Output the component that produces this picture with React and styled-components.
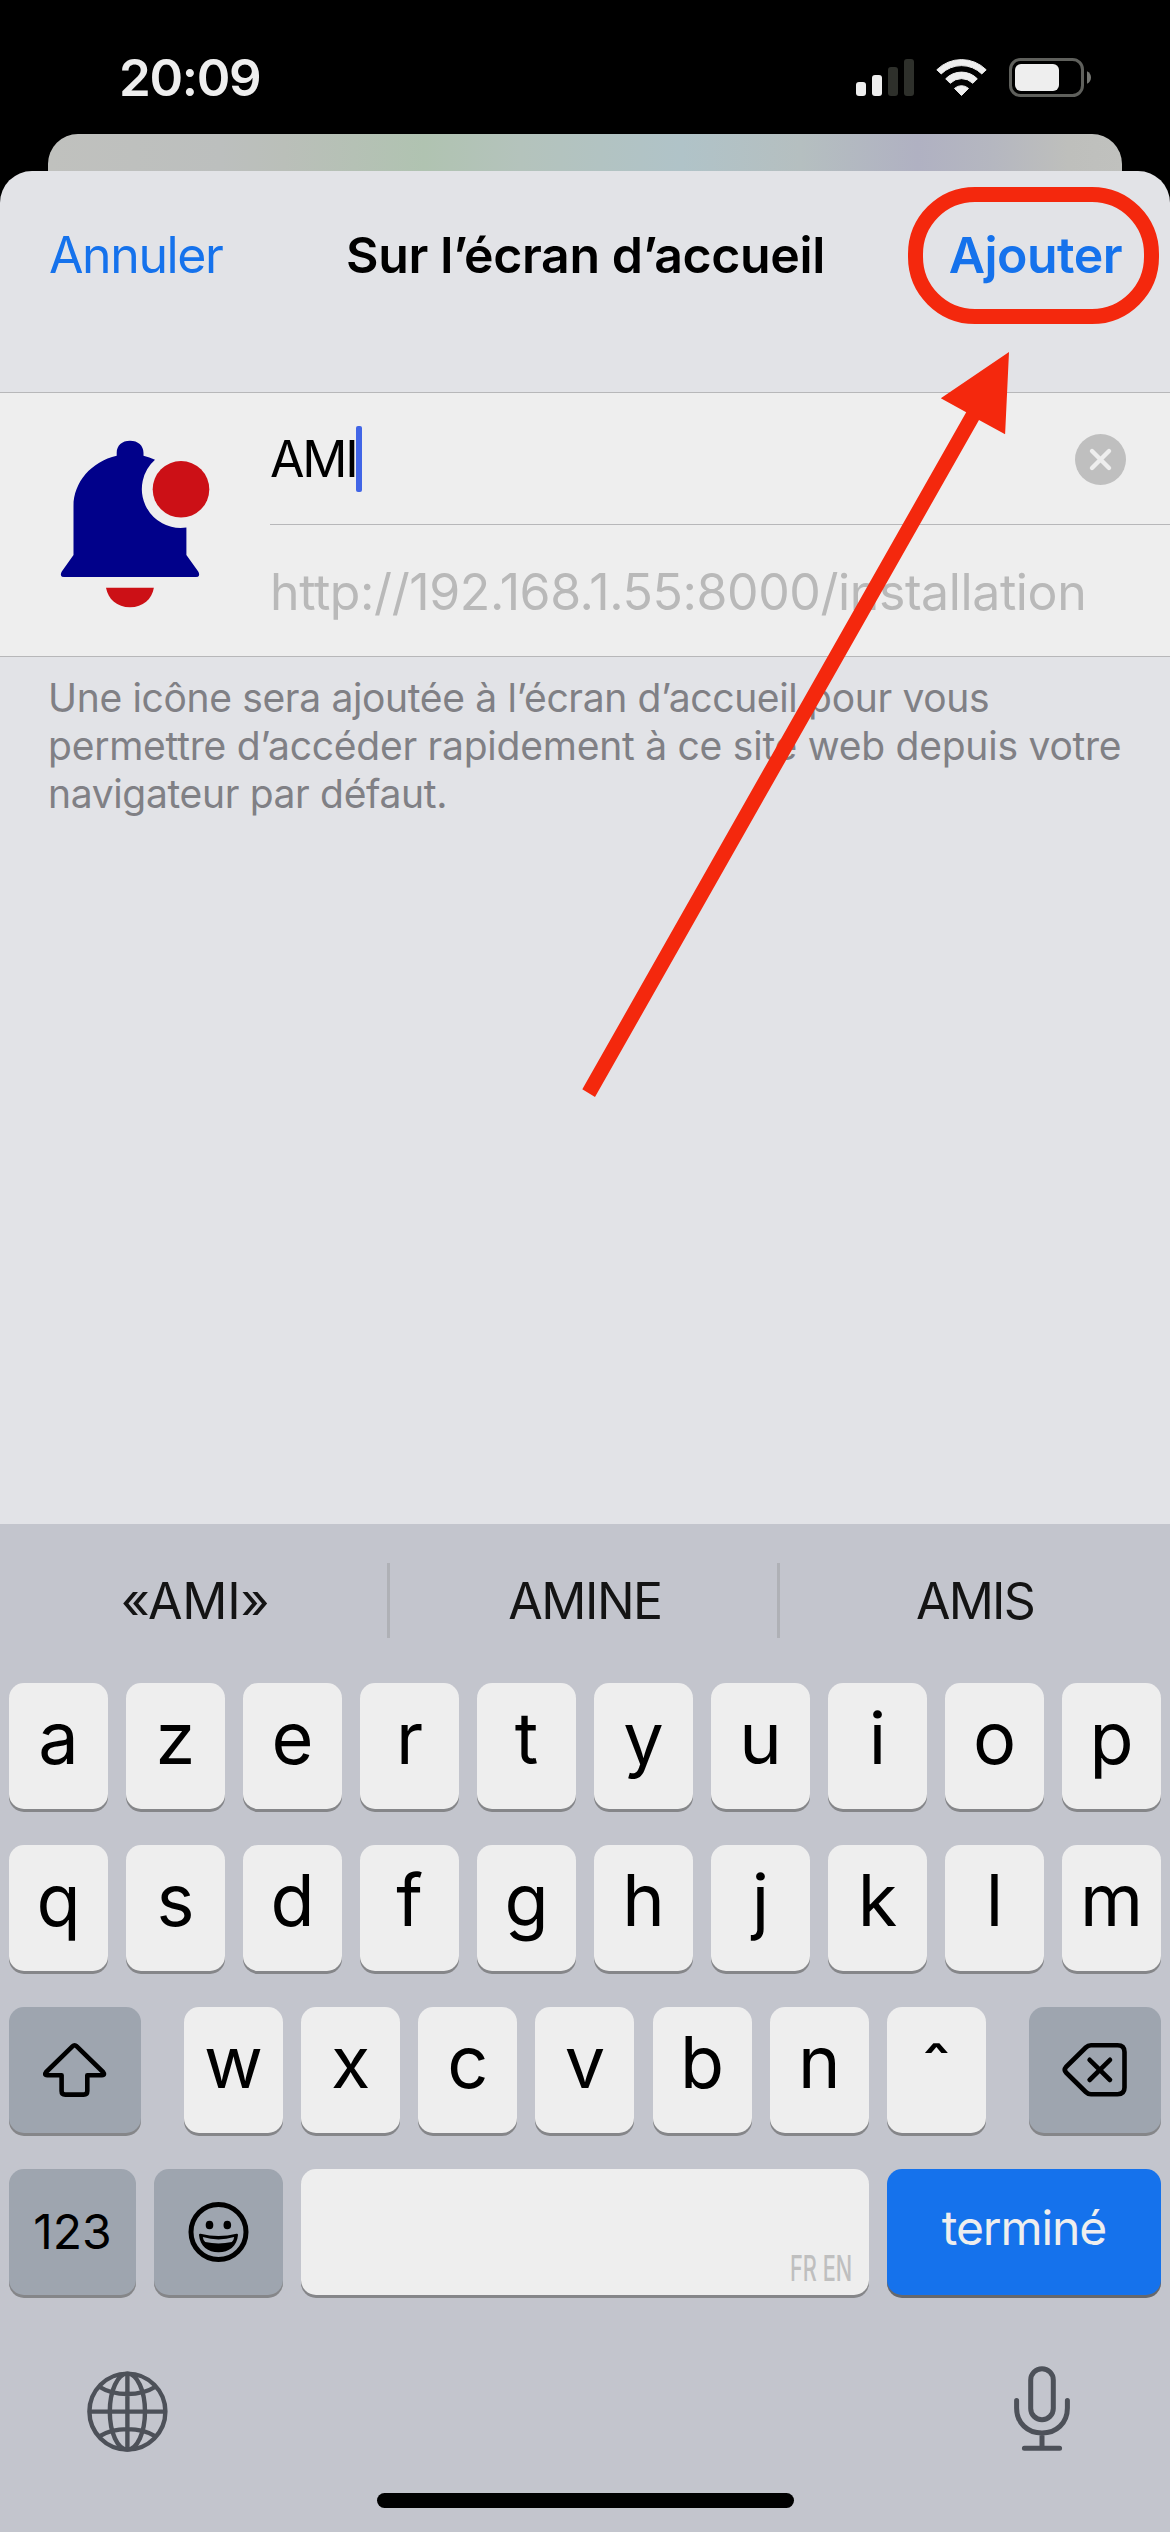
import React from 'react';
import styled, { createGlobalStyle } from 'styled-components';

const GlobalStyle = createGlobalStyle`
  *, *::before, *::after { box-sizing: border-box; }
  body { margin: 0; background: #000; }
  button { border: 0; padding: 0; background: none; font: inherit; color: inherit; }
`;

const color = {
  blue: '#1572ec',
  red: '#f4280d',
  sheet: '#e2e3e7',
  cell: '#eeeeee',
  line: '#b7b7b9',
  keyboard: '#c3c5cd',
  darkKey: '#9ea5af',
  toolIcon: '#4d5159',
};

const Screen = styled.div`
  position: relative;
  display: flex;
  flex-direction: column;
  width: 1170px;
  height: 2532px;
  overflow: hidden;
  background: #000;
  color: #000;
  font-family: Inter, "Liberation Sans", sans-serif;
`;

const Text = styled.span`
  display: block;
  margin: 0;
  font-size: ${(p) => p.$size || 50}px;
  font-weight: ${(p) => p.$weight || 400};
  letter-spacing: ${(p) => p.$track || 0}px;
  line-height: ${(p) => p.$line || 60}px;
  color: ${(p) => p.$color || 'inherit'};
  white-space: pre;
`;

const StatusBar = styled.header`
  display: flex;
  justify-content: space-between;
  align-items: center;
  height: 134px;
  padding: 48px 79px 26px 119px;
`;

const StatusIcons = styled.div`
  display: flex;
  gap: 22px;
`;

const BackCard = styled.div`
  height: 37px;
  margin: 0 48px;
  border-radius: 30px 30px 0 0;
  background: linear-gradient(90deg, #c0c1be 0%, #bcbfbe 16%, #babfb9 22%, #b0c3b1 35%, #b4c3bc 44%, #b0c3c8 59%, #b5bfc0 70%, #b0b1c2 81%, #b5b7c0 88%, #bebfbc 95%, #c0c1be 100%);
`;

const Sheet = styled.main`
  flex: 1;
  border-radius: 32px 32px 0 0;
  background: ${color.sheet};
`;

const NavBar = styled.nav`
  display: grid;
  grid-template-columns: 1fr auto 1fr;
  height: 221px;
  padding: 54px 48px 0 49px;
`;

const NavButton = styled.button`
  justify-self: ${(p) => p.$side};
  align-self: start;
`;

const SiteCard = styled.section`
  display: flex;
  height: 265px;
  border-top: 1px solid ${color.line};
  border-bottom: 1px solid ${color.line};
  background: ${color.cell};
`;

const SiteIcon = styled.div`
  width: 270px;
  padding: 47px 0 0 60px;
`;

const Fields = styled.div`
  flex: 1;
  display: flex;
  flex-direction: column;
`;

const Field = styled.div`
  flex: 1;
  display: flex;
  align-items: center;
  padding: ${(p) => p.$nudge || 0}px 44px 0 0;
  border-top: ${(p) => (p.$divided ? `1px solid ${color.line}` : '0')};
`;

const Caret = styled.span`
  width: 6px;
  height: 66px;
  margin-left: -1px;
  margin-right: auto;
  border-radius: 2px;
  background: #4165e6;
`;

const Hint = styled.p`
  margin: 0;
  padding: 17px 0 0 48px;
`;

const Keyboard = styled.section`
  height: 1008px;
  background: ${color.keyboard};
`;

const Suggestions = styled.div`
  display: grid;
  grid-template-columns: repeat(3, 1fr);
  height: 159px;
  padding: 39px 0 45px;
`;

const Suggestion = styled.div`
  display: flex;
  align-items: center;
  justify-content: center;
  padding-left: ${(p) => (p.$last ? 0 : 3)}px;
  border-right: ${(p) => (p.$last ? 0 : 3)}px solid #afb1b6;
`;

const KeyRows = styled.div`
  display: flex;
  flex-direction: column;
  gap: 36px;
  padding: 0 9px;
`;

const KeyRow = styled.div`
  display: flex;
  justify-content: space-between;
`;

const LetterGroup = styled.div`
  display: flex;
  justify-content: space-between;
  width: 802px;
`;

const Key = styled.button`
  display: flex;
  align-items: ${(p) => (p.$corner ? 'flex-end' : 'center')};
  justify-content: ${(p) => (p.$corner ? 'flex-end' : 'center')};
  width: ${(p) => p.$width || 99}px;
  height: 126px;
  padding: ${(p) => (p.$corner ? '0 17px 7px 0' : `${p.$drop || 0}px 0 ${p.$lift || 0}px`)};
  border-radius: 15px;
  background: ${(p) => p.$bg || color.cell};
  box-shadow: 0 3px 0 ${(p) => p.$shade || '#858689'};
`;

const Languages = styled(Text)`
  transform: scaleX(0.62);
  transform-origin: right bottom;
`;

const Tools = styled.div`
  display: flex;
  justify-content: space-between;
  padding: 71px 98px 0 85px;
`;

const HomeIndicator = styled.div`
  width: 417px;
  height: 15px;
  margin: 39px auto 0;
  border-radius: 8px;
  background: #000;
`;

const Ring = styled.div`
  position: absolute;
  left: 908px;
  top: 187px;
  width: 251px;
  height: 137px;
  border: 15px solid ${color.red};
  border-radius: 67px;
`;

const Pointer = styled.svg`
  position: absolute;
  left: 580px;
  top: 350px;
`;

const Signal = () => (
  <svg width="58" height="40" viewBox="0 0 58 40">
    <rect x="0" y="24" width="10" height="14" rx="3" fill="#eee" />
    <rect x="16" y="17" width="10" height="21" rx="3" fill="#eee" />
    <rect x="32" y="9" width="10" height="29" rx="3" fill="#2e302b" />
    <rect x="48" y="1" width="10" height="37" rx="3" fill="#2e302b" />
  </svg>
);

const Wifi = () => (
  <svg width="51" height="40" viewBox="0 0 51 40" fill="#eee" stroke="#eee" strokeWidth="1" strokeLinejoin="round">
    <path d="M.8 11.8A35 35 0 0 1 50.200 11.800L45.800 15.900A29 29 0 0 0 5.200 15.900Z" />
    <path d="M9.700 20.800A22 22 0 0 1 41.300 20.800L36.800 25.300A16 16 0 0 0 14.200 25.300Z" />
    <path d="M18.500 30.400A10.400 10.400 0 0 1 32.500 30.400L25.500 37.500Z" />
  </svg>
);

const Battery = () => (
  <svg width="82" height="40" viewBox="0 0 82 40">
    <rect x="1.5" y="1.5" width="72" height="36" rx="10" fill="none" stroke="#5f605c" strokeWidth="3" />
    <rect x="6" y="6" width="44" height="27" rx="6" fill="#eee" />
    <path d="M78 13.3C80.5 14.3 82 16.7 82 19.5S80.5 24.7 78 25.7Z" fill="#757672" />
  </svg>
);

const BellIcon = () => (
  <svg width="152" height="170" viewBox="0 0 152 170">
    <path
      fill="#01018a"
      d="M56.700 15.700V13C56.700 5.500 62 .7 70 .7S83.500 5.500 83.500 13V15.800Q89.500 17.300 95 19.800A39 39 0 0 0 126.400 87.600V115L138.200 131.600Q139.500 134 139 135.500Q138.600 137 136 137H4Q1.400 137 1 135.500Q.5 134 1.800 131.600L13.500 115V66C13.500 42 31.500 21.500 56.700 15.700Z"
    />
    <circle cx="121" cy="49.300" r="28.300" fill="#cc1016" />
    <path fill="#cc1016" d="M46 147.700H93.900C92 159 83 167.200 70 167.200S48 159 46 147.700Z" />
  </svg>
);

const ClearIcon = () => (
  <svg width="51" height="51" viewBox="0 0 51 51">
    <circle cx="25.500" cy="25.500" r="25.500" fill="#bfbfbf" />
    <path d="M17 17L34 34M34 17L17 34" stroke="#eee" strokeWidth="4.400" strokeLinecap="round" />
  </svg>
);

const ShiftIcon = () => (
  <svg width="80" height="80" viewBox="0 0 80 80" fill="none" stroke="#000" strokeWidth="4.600" strokeLinejoin="round">
    <path d="M37.700 16.200Q39.600 14.200 41.500 16.200L68 42Q70.500 45.200 67 45.200H52.300V61Q52.300 64.600 48.700 64.600H30.300Q26.600 64.600 26.600 61V45.200H12.200Q8.700 45.200 11.200 42Z" />
  </svg>
);

const DeleteIcon = () => (
  <svg width="80" height="80" viewBox="0 0 80 80" fill="none" stroke="#000" strokeWidth="4.600" strokeLinejoin="round" strokeLinecap="round">
    <path d="M36 15.300H62.500Q69.500 15.300 69.500 22V57.500Q69.500 64.200 62.500 64.200H36Q33 64.200 30.800 62L11 42.500Q8.600 39.800 11 37L30.800 17.500Q33 15.300 36 15.300Z" />
    <path d="M34.600 29.800L55 50M55 29.800L34.600 50" />
  </svg>
);

const EmojiIcon = () => (
  <svg width="64" height="64" viewBox="0 0 64 64">
    <circle cx="31.500" cy="32" r="27.500" fill="none" stroke="#000" strokeWidth="5" />
    <ellipse cx="22.500" cy="25" rx="3.800" ry="4.300" />
    <ellipse cx="40.300" cy="25" rx="3.800" ry="4.300" />
    <path d="M13.500 33.700Q31.500 38.500 49.500 33.700Q51 33.400 51 35C50 46.500 42 52.200 31.500 52.200S13 46.500 12 35Q12 33.400 13.500 33.700Z" />
    <path d="M15.800 37Q31.500 41.800 47.200 37Q46.600 41 44.800 42Q31.500 44.800 18.200 42Q16.400 41 15.800 37Z" fill={color.darkKey} />
  </svg>
);

const GlobeIcon = () => (
  <svg width="84" height="88" viewBox="0 0 84 88" fill="none" stroke={color.toolIcon} strokeWidth="4.400">
    <circle cx="42.400" cy="45.600" r="38" />
    <ellipse cx="42.400" cy="45.600" rx="17.600" ry="38" />
    <path d="M42.400 7.600V83.600M4.400 45.600H80.400M14.800 21C29.500 30.400 55.300 30.400 70 21M14.800 70.200C29.500 60.800 55.300 60.800 70 70.200" />
  </svg>
);

const MicIcon = () => (
  <svg width="60" height="88" viewBox="0 0 60 88" fill="none" stroke={color.toolIcon} strokeWidth="5" strokeLinecap="round">
    <rect x="18.700" y="2.700" width="22.600" height="51" rx="11.300" />
    <path d="M4.600 34.500V42C4.600 57 15.500 67 30 67S55.400 57 55.400 42V34.500M30 67V82.300M12.400 82.300H47.600" />
  </svg>
);

const Letter = ({ children, drop = 0, lift = 16 }) => (
  <Key $drop={drop} $lift={lift}>
    <Text $size={72} $line={86}>{children}</Text>
  </Key>
);

const suggestions = [
  { label: '«AMI»', track: -0.2 },
  { label: 'AMINE', track: -1.5 },
  { label: 'AMIS', track: -1.8 },
];

export default function App() {
  return (
    <Screen>
      <GlobalStyle />
      <StatusBar>
        <Text $size={51} $weight={600} $track={-1.33} $color="#eeeeee">20:09</Text>
        <StatusIcons>
          <Signal />
          <Wifi />
          <Battery />
        </StatusIcons>
      </StatusBar>
      <BackCard />
      <Sheet>
        <NavBar>
          <NavButton $side="start">
            <Text $track={-1.4} $color={color.blue}>Annuler</Text>
          </NavButton>
          <Text as="h1" $weight={600} $track={-0.37}>Sur l’écran d’accueil</Text>
          <NavButton $side="end">
            <Text $weight={600} $track={-0.54} $color={color.blue}>Ajouter</Text>
          </NavButton>
        </NavBar>
        <SiteCard>
          <SiteIcon>
            <BellIcon />
          </SiteIcon>
          <Fields>
            <Field $nudge={2}>
              <Text $track={-2.2}>AMI</Text>
              <Caret />
              <ClearIcon />
            </Field>
            <Field $divided $nudge={3}>
              <Text $track={-0.4} $color="#b9b9b9">http://192.168.1.55:8000/installation</Text>
            </Field>
          </Fields>
        </SiteCard>
        <Hint>
          <Text $size={39} $line={48} $track={-0.34} $color="#808085">Une icône sera ajoutée à l’écran d’accueil pour vous</Text>
          <Text $size={39} $line={48} $track={-0.24} $color="#808085">permettre d’accéder rapidement à ce site web depuis votre</Text>
          <Text $size={39} $line={48} $track={-0.34} $color="#808085">navigateur par défaut.</Text>
        </Hint>
      </Sheet>
      <Keyboard>
        <Suggestions>
          {suggestions.map((s, i) => (
            <Suggestion key={s.label} $last={i === suggestions.length - 1}>
              <Text $track={s.track} $color="#141414">{s.label}</Text>
            </Suggestion>
          ))}
        </Suggestions>
        <KeyRows>
          <KeyRow>{[...'azertyuiop'].map((c) => <Letter key={c}>{c}</Letter>)}</KeyRow>
          <KeyRow>{[...'qsdfghjklm'].map((c) => <Letter key={c}>{c}</Letter>)}</KeyRow>
          <KeyRow>
            <Key $width={132} $bg={color.darkKey}><ShiftIcon /></Key>
            <LetterGroup>
              {[...'wxcvbn'].map((c) => <Letter key={c}>{c}</Letter>)}
              <Letter drop={4} lift={0}>ˆ</Letter>
            </LetterGroup>
            <Key $width={132} $bg={color.darkKey}><DeleteIcon /></Key>
          </KeyRow>
          <KeyRow>
            <Key $width={127} $bg={color.darkKey}>
              <Text $size={48}>123</Text>
            </Key>
            <Key $width={129} $bg={color.darkKey}><EmojiIcon /></Key>
            <Key $width={568} $corner>
              <Languages $size={35} $line={40} $weight={500} $color="#bfbfbf">FR EN</Languages>
            </Key>
            <Key $width={274} $bg={color.blue} $shade="#66686c" $lift={9}>
              <Text $size={48} $track={-1.1} $color="#eeeeee">terminé</Text>
            </Key>
          </KeyRow>
        </KeyRows>
        <Tools>
          <GlobeIcon />
          <MicIcon />
        </Tools>
        <HomeIndicator />
      </Keyboard>
      <Ring />
      <Pointer width="432" height="750" viewBox="0 0 432 750" fill={color.red}>
        <path d="M429 2L425.100 84.300L399 70L15 747L2.300 739.300L386.200 62.200L360.800 48.300Z" />
      </Pointer>
    </Screen>
  );
}
